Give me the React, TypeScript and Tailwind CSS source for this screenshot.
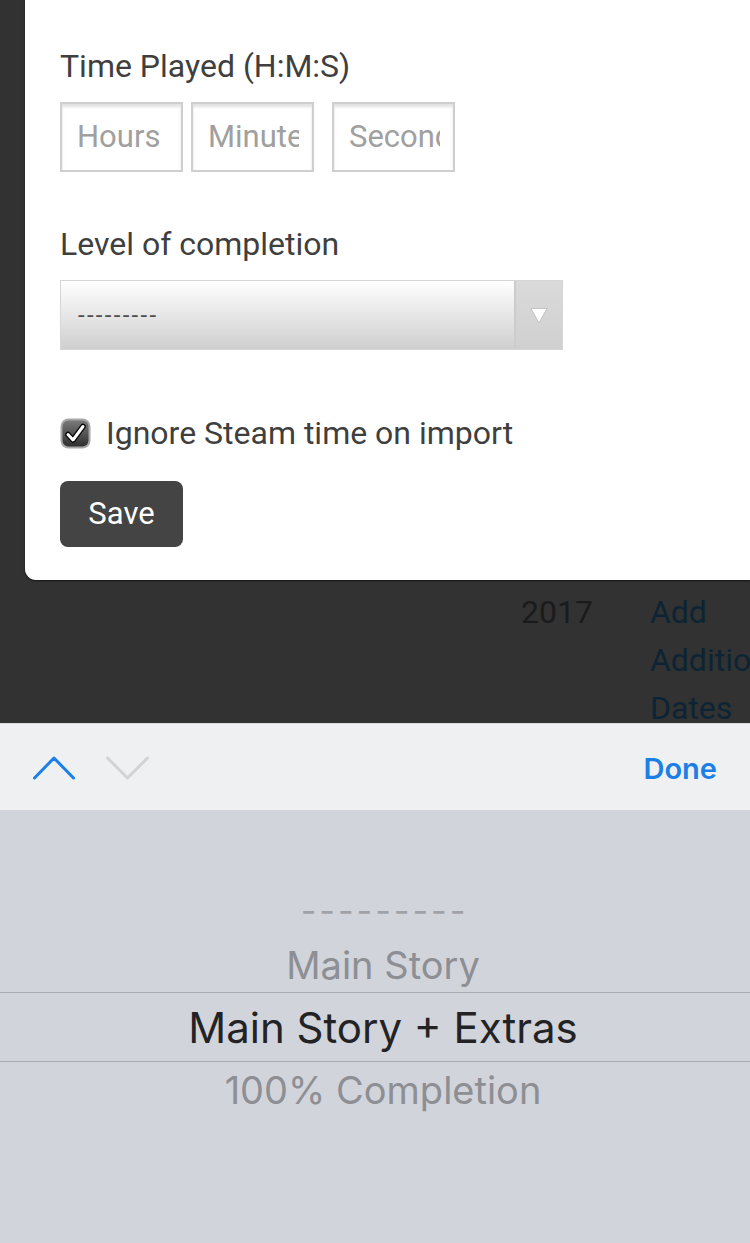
import React from "react";

function CheckBox() {
  return (
    <svg width="31" height="31" viewBox="0 0 31 31" className="shrink-0">
      <defs>
        <linearGradient id="cbg" x1="0" y1="0" x2="0" y2="1">
          <stop offset="0" stopColor="#7a7a7a" />
          <stop offset="1" stopColor="#2f2f2f" />
        </linearGradient>
      </defs>
      <rect x="0.5" y="0.5" width="30" height="30" rx="8" fill="#a8a8a8" />
      <rect x="2.5" y="2.5" width="26" height="26" rx="6" fill="url(#cbg)" />
      <path d="M8 16.5 L13 22 L23 8.5" fill="none" stroke="#000" strokeWidth="5.5" strokeLinecap="round" strokeLinejoin="round" />
      <path d="M8 16.5 L13 22 L23 8.5" fill="none" stroke="#fff" strokeWidth="3" strokeLinecap="round" strokeLinejoin="round" />
    </svg>
  );
}

function TimeInput({ placeholder, ml }: { placeholder: string; ml: string }) {
  return (
    <div
      className={`${ml} w-[123px] h-[70px] border-2 border-[#cfcfcf] bg-white shadow-[inset_0_3px_3px_rgba(0,0,0,0.12)] flex items-center pl-[15px] pr-[13px]`}
    >
      <div className="w-full overflow-hidden whitespace-nowrap text-[31px] leading-[40px] text-[#a0a0a0]">
        {placeholder}
      </div>
    </div>
  );
}

export default function App() {
  return (
    <div className="w-[750px] h-[1243px] overflow-hidden flex flex-col font-['Roboto','Liberation_Sans',sans-serif]">
      <div className="h-[723px] shrink-0 bg-[#323232] flex flex-col">
        <div className="ml-[25px] h-[580px] shrink-0 bg-white rounded-bl-[11px] shadow-[0_1px_2px_rgba(0,0,0,0.6)] pl-[35px] pt-[48px] flex flex-col">
          <div className="text-[32px] leading-[36px] text-[#3f3f3f]">Time Played (H:M:S)</div>
          <div className="mt-[18px] flex">
            <TimeInput placeholder="Hours" ml="ml-0" />
            <TimeInput placeholder="Minutes" ml="ml-[8px]" />
            <TimeInput placeholder="Seconds" ml="ml-[18px]" />
          </div>
          <div className="mt-[54px] text-[32px] leading-[36px] text-[#3f3f3f]">Level of completion</div>
          <div className="mt-[18px] w-[503px] h-[70px] flex border border-[#d6d6d6] bg-gradient-to-b from-[#ffffff] to-[#cfcfcf]">
            <div className="flex-1 flex items-center pl-[17px]">
              <span className="text-[24px] text-[#505050] tracking-[2.3px] leading-none">---------</span>
            </div>
            <div className="w-[48px] border-l-2 border-[#cccccc] bg-gradient-to-b from-[#dadada] to-[#d0d0d0] flex items-center justify-center">
              <svg width="18" height="17" viewBox="0 0 18 17">
                <path d="M1 1.5 L17 1.5 L9 16 Z" fill="#ffffff" stroke="#b8b8b8" strokeWidth="0.8" strokeLinejoin="round" />
              </svg>
            </div>
          </div>
          <div className="mt-[65px] h-[36px] flex items-center">
            <CheckBox />
            <span className="ml-[15px] text-[32px] leading-[36px] text-[#3f3f3f]">Ignore Steam time on import</span>
          </div>
          <button className="mt-[30px] w-[123px] h-[66px] rounded-[8px] bg-[#444444] text-white text-[31px] flex items-center justify-center">
            Save
          </button>
        </div>
        <div className="flex pt-[8px] text-[32px] leading-[48px] whitespace-nowrap">
          <div className="ml-[521px] text-[#1b1b1b]">2017</div>
          <div className="ml-[57px] text-[#0c2434] flex flex-col">
            <span>Add</span>
            <span>Additional</span>
            <span>Dates</span>
          </div>
        </div>
      </div>
      <div className="h-[87px] shrink-0 bg-[#eff0f2] border-t border-[#d9dadd] flex items-center pl-[33px] pr-[33px] font-['Inter','Roboto',sans-serif]">
        <svg width="42" height="26" viewBox="0 0 42 26" className="mt-[2px]">
          <path d="M1.5 23 L21 3 L40.5 23" fill="none" stroke="#1b7fe6" strokeWidth="3" strokeLinecap="round" strokeLinejoin="round" />
        </svg>
        <svg width="43" height="26" viewBox="0 0 43 26" className="ml-[31px] mt-[2px]">
          <path d="M1.5 3 L21.5 23 L41.5 3" fill="none" stroke="#d3d3d6" strokeWidth="3" strokeLinecap="round" strokeLinejoin="round" />
        </svg>
        <div className="ml-auto text-[29px] font-semibold text-[#1b7fe6] mt-[3px]">Done</div>
      </div>
      <div className="flex-1 bg-[#d1d4db] flex flex-col pt-[72px] font-['Inter','Roboto',sans-serif]">
        <div className="h-[56px] flex items-center justify-center pl-[19px] text-[34px] text-[#a0a2a7] tracking-[3px]">---------</div>
        <div className="h-[54px] flex items-center justify-center pl-[16px] text-[38px] text-[#8d8f94]">Main Story</div>
        <div className="h-[70px] border-y border-[#a8abb2] flex items-center justify-center pl-[16px] text-[42px] text-[#232325]">
          Main Story + Extras
        </div>
        <div className="h-[56px] flex items-center justify-center pl-[16px] text-[38px] text-[#8d8f94]">100% Completion</div>
      </div>
    </div>
  );
}
